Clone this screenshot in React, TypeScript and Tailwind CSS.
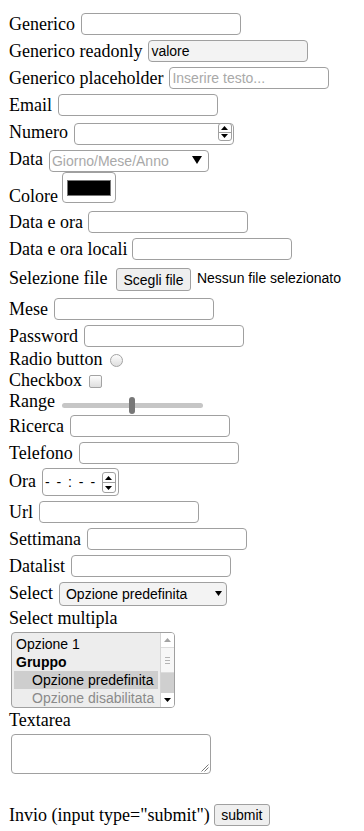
import React from "react";

const LBL =
  "font-['Liberation_Serif',serif] text-[18px] leading-[22px] text-black whitespace-nowrap shrink-0";
const LBL21 =
  "font-['Liberation_Serif',serif] text-[18px] leading-[21px] text-black whitespace-nowrap shrink-0";
const SANS = "font-['Liberation_Sans',Arial,sans-serif] text-[14px] leading-[16px] text-black";
const BOX =
  "font-['Liberation_Sans',Arial,sans-serif] text-[14px] leading-[16px] text-black w-[160px] h-[22px] border border-[#a0a0a0] rounded-[4px] px-[2px] shrink-0 outline-none placeholder:text-[#a9a9a9]";

function TriUp({ w, h, color = "#000" }: { w: number; h: number; color?: string }) {
  return (
    <svg width={w} height={h} viewBox={`0 0 ${w} ${h}`} className="block">
      <polygon points={`0,${h} ${w},${h} ${w / 2},0`} fill={color} />
    </svg>
  );
}
function TriDown({ w, h, color = "#000" }: { w: number; h: number; color?: string }) {
  return (
    <svg width={w} height={h} viewBox={`0 0 ${w} ${h}`} className="block">
      <polygon points={`0,0 ${w},0 ${w / 2},${h}`} fill={color} />
    </svg>
  );
}

function Spinner({ className }: { className: string }) {
  return (
    <div
      className={`absolute flex flex-col border border-[#a0a0a0] rounded-[3px] bg-white overflow-hidden ${className}`}
    >
      <div className="flex-1 flex items-center justify-center border-b border-[#a0a0a0]">
        <TriUp w={7} h={4} />
      </div>
      <div className="flex-1 flex items-center justify-center">
        <TriDown w={7} h={4} />
      </div>
    </div>
  );
}

function TextRow({ label, h, children }: { label: string; h: string; children?: React.ReactNode }) {
  return (
    <div className={`flex items-start ${h}`}>
      <span className={LBL}>{label}</span>
      {children ?? <input className={`${BOX} bg-white ml-[6px]`} />}
    </div>
  );
}

export default function App() {
  return (
    <div className="min-h-[831px] w-[364px] bg-white pt-[13px] pl-[9px]">
      <TextRow label="Generico" h="h-[27px]" />
      <TextRow label="Generico readonly" h="h-[27px]">
        <input className={`${BOX} ml-[6px] bg-[#f3f3f3]`} readOnly defaultValue="valore" />
      </TextRow>
      <TextRow label="Generico placeholder" h="h-[27px]">
        <input className={`${BOX} bg-white ml-[6px]`} placeholder="Inserire testo..." />
      </TextRow>
      <TextRow label="Email" h="h-[27px]" />
      <TextRow label="Numero" h="h-[27px]">
        <div className="relative ml-[6px] w-[160px] h-[22px] shrink-0">
          <input className={`${BOX} bg-white`} />
          <Spinner className="right-[2px] top-[2px] w-[14px] h-[18px]" />
        </div>
      </TextRow>
      <TextRow label="Data" h="h-[24px]">
        <div className="relative ml-[6px] w-[160px] h-[22px] shrink-0">
          <input className={`${BOX} bg-white`} placeholder="Giorno/Mese/Anno" />
          <svg className="absolute left-[143px] top-[8px]" width="10" height="8" viewBox="0 0 10 8">
            <polygon points="0,0 10,0 5,8" fill="#000" />
          </svg>
        </div>
      </TextRow>

      {/* Colore */}
      <div className="flex items-start h-[39px]">
        <span className={`${LBL} mt-[13px]`}>Colore</span>
        <div className="ml-[4px] w-[54px] h-[31px] border border-[#a0a0a0] rounded-[4px] bg-white pt-[7px] pl-[4px] shrink-0">
          <div className="w-[44px] h-[16px] bg-black border border-[#777777]" />
        </div>
      </div>

      <TextRow label="Data e ora" h="h-[27px]">
        <input className={`${BOX} bg-white ml-[5px]`} />
      </TextRow>
      <TextRow label="Data e ora locali" h="h-[27px]">
        <input className={`${BOX} bg-white ml-[5px]`} />
      </TextRow>

      {/* Selezione file */}
      <div className="flex items-start h-[33px]">
        <span className={`${LBL} mt-[2px]`}>Selezione file</span>
        <div
          className={`${SANS} ml-[8.5px] mt-[3px] w-[75px] h-[23px] border border-[#a0a0a0] rounded-[3px] bg-[#efefef] flex items-center justify-center shrink-0`}
        >
          Scegli file
        </div>
        <span className={`${SANS} ml-[6px] mt-[5px] whitespace-nowrap`}>Nessun file selezionato</span>
      </div>

      <TextRow label="Mese" h="h-[27px]" />
      <TextRow label="Password" h="h-[24px]">
        <input type="password" className={`${BOX} bg-white ml-[6px]`} />
      </TextRow>

      {/* Radio */}
      <div className="flex items-start h-[21px]">
        <span className={LBL21}>Radio button</span>
        <div className="ml-[7px] mt-[5px] w-[13px] h-[13px] rounded-full border border-[#a3a3a3] bg-linear-to-b from-[#fdfdfd] to-[#dedede] shrink-0" />
      </div>

      {/* Checkbox */}
      <div className="flex items-start h-[21px]">
        <span className={LBL21}>Checkbox</span>
        <div className="ml-[7px] mt-[5px] w-[13px] h-[13px] rounded-[2px] border border-[#a3a3a3] bg-linear-to-b from-[#fdfdfd] to-[#dedede] shrink-0" />
      </div>

      {/* Range */}
      <div className="flex items-start h-[24px]">
        <span className={LBL21}>Range</span>
        <div className="relative ml-[7px] w-[141px] h-[24px] shrink-0">
          <div className="mt-[12px] h-[5px] rounded-full bg-[#c6c6c6]" />
          <div className="absolute left-[67px] top-[6px] w-[6px] h-[17px] rounded-[3px] bg-[#777777]" />
        </div>
      </div>

      <TextRow label="Ricerca" h="h-[27px]" />
      <TextRow label="Telefono" h="h-[26px]" />

      {/* Ora */}
      <div className="flex items-start h-[33px]">
        <span className={`${LBL} mt-[2px]`}>Ora</span>
        <div className="relative ml-[6px] w-[77px] h-[28px] border border-[#a0a0a0] rounded-[4px] bg-white shrink-0 flex items-center pl-[2px]">
          <span className={`${SANS} tracking-[1.5px] whitespace-nowrap`}>- - : - -</span>
          <Spinner className="right-[2px] top-[3px] w-[14px] h-[21px]" />
        </div>
      </div>

      <TextRow label="Url" h="h-[27px]" />
      <TextRow label="Settimana" h="h-[27px]" />
      <TextRow label="Datalist" h="h-[27px]" />

      {/* Select */}
      <div className="flex items-start h-[26px]">
        <span className={LBL}>Select</span>
        <div className="relative ml-[6px] w-[168px] h-[24px] border border-[#a0a0a0] rounded-[4px] bg-[#f3f3f3] shrink-0 flex items-center pl-[6px]">
          <span className={`${SANS} whitespace-nowrap`}>Opzione predefinita</span>
          <div className="absolute left-[155px] top-[8px]">
            <TriDown w={7} h={5} />
          </div>
        </div>
      </div>

      {/* Select multipla */}
      <div className={LBL21}>Select multipla</div>
      <div className="mt-[3px] ml-[2px] w-[164px] h-[76px] border border-[#a0a0a0] rounded-[4px] bg-[#ededed] flex overflow-hidden">
        <div className={`${SANS} w-[148px] px-[2px] pt-[2px] flex flex-col`}>
          <div className="h-[18px] flex items-center pl-[2px] whitespace-nowrap">Opzione 1</div>
          <div className="h-[18px] flex items-center pl-[2px] font-bold whitespace-nowrap">Gruppo</div>
          <div className="h-[18px] flex items-center pl-[18px] bg-[#cecece] whitespace-nowrap">
            Opzione predefinita
          </div>
          <div className="h-[18px] flex items-center pl-[18px] text-[#8a8a8a] whitespace-nowrap">
            Opzione disabilitata
          </div>
        </div>
        <div className="w-[14px] flex flex-col bg-white border-l border-[#d4d4d4]">
          <div className="h-[14px] flex items-center justify-center">
            <TriUp w={7} h={4} color="#a3a3a3" />
          </div>
          <div className="h-[26px] flex flex-col items-center justify-center gap-[2px] bg-[#f7f7f7] border-y border-[#dcdcdc]">
            <div className="w-[5px] h-px bg-[#b4b4b4]" />
            <div className="w-[5px] h-px bg-[#b4b4b4]" />
            <div className="w-[5px] h-px bg-[#b4b4b4]" />
          </div>
          <div className="flex-1 bg-[#cfcfcf]" />
          <div className="h-[14px] flex items-center justify-center">
            <TriDown w={7} h={4} />
          </div>
        </div>
      </div>

      {/* Textarea */}
      <div className={`${LBL21} mt-[2px]`}>Textarea</div>
      <div className="relative mt-[3px] ml-[2px] w-[200px] h-[40px] border border-[#a0a0a0] rounded-[4px] bg-white">
        <svg className="absolute right-[1px] bottom-[1px]" width="9" height="9" viewBox="0 0 9 9">
          <line x1="8.5" y1="1.5" x2="1.5" y2="8.5" stroke="#7a7a7a" strokeWidth="1" />
          <line x1="8.5" y1="4.5" x2="4.5" y2="8.5" stroke="#7a7a7a" strokeWidth="1" />
        </svg>
      </div>

      {/* Submit */}
      <div className="flex items-start h-[27px] mt-[30px]">
        <span className={LBL}>Invio (input type="submit")</span>
        <div
          className={`${SANS} ml-[4px] w-[56px] h-[22px] border border-[#a0a0a0] rounded-[3px] bg-[#efefef] flex items-center justify-center shrink-0`}
        >
          submit
        </div>
      </div>
    </div>
  );
}
